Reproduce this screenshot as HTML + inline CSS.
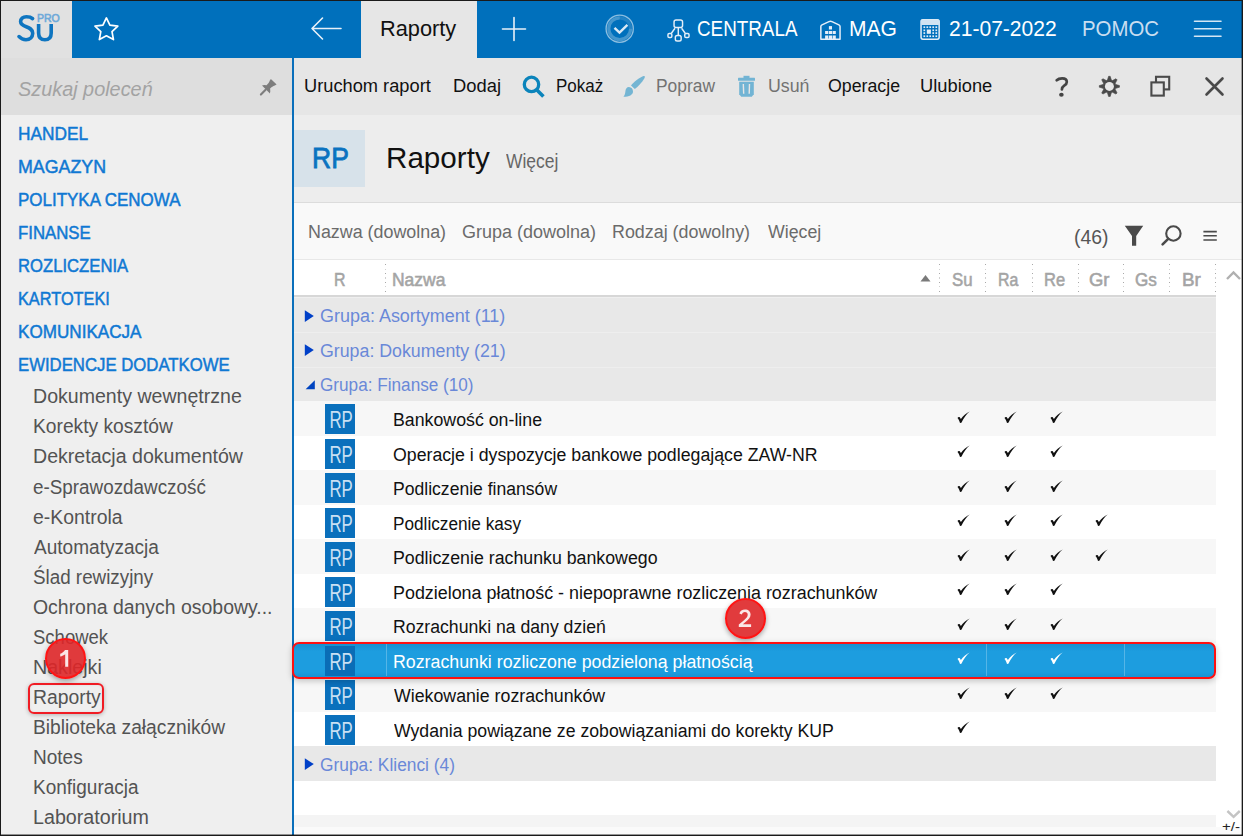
<!DOCTYPE html>
<html><head><meta charset="utf-8"><style>
html,body{margin:0;padding:0;}
body{width:1243px;height:836px;overflow:hidden;background:#1a1a1a;position:relative;font-family:"Liberation Sans", sans-serif;}
svg{display:block;overflow:visible}
</style></head><body>
<div style="position:absolute;left:1px;top:1px;width:1241px;height:834px;background:#ffffff;"></div>
<div style="position:absolute;left:1px;top:1px;width:71px;height:57px;background:#e1e1e1;"></div>
<div style="position:absolute;left:72px;top:1px;width:1170px;height:57px;background:#0070bc;"></div>
<svg style="position:absolute;left:14px;top:12px;" width="50" height="34" viewBox="0 0 50 34">
<path d="M18.6 6.6 C17.0 5.1 14.8 4.7 12.4 4.7 C8.8 4.7 6.6 6.8 6.6 9.5 C6.6 16.0 18.7 13.6 18.7 21.3 C18.7 25.1 15.9 27.7 12.0 27.7 C9.1 27.7 6.8 26.5 5.0 24.6" fill="none" stroke="#0f75c0" stroke-width="3.6" stroke-linecap="round"/>
<path d="M24.6 11.9 V21.0 C24.6 25.5 27.1 27.8 30.9 27.8 C34.7 27.8 37.2 25.5 37.2 21.0 V11.9" fill="none" stroke="#0f75c0" stroke-width="3.6"/>
<text x="22.9" y="10" font-family="Liberation Sans" font-size="11" fill="#6ea9d9" textLength="22.8" lengthAdjust="spacingAndGlyphs" stroke="#6ea9d9" stroke-width="0.6">PRO</text>
</svg>
<svg style="position:absolute;left:92px;top:15px;" width="28" height="28" viewBox="0 0 28 28"><polygon points="14.40,2.90 17.87,10.13 25.81,11.19 20.01,16.72 21.45,24.61 14.40,20.80 7.35,24.61 8.79,16.72 2.99,11.19 10.93,10.13" fill="none" stroke="#fff" stroke-width="1.7" stroke-linejoin="round"/></svg>
<svg style="position:absolute;left:308px;top:15px;" width="38" height="28" viewBox="0 0 38 28"><path d="M4 13.5 H33 M14.5 3 L4 13.5 L14.5 24" fill="none" stroke="#e8f0f8" stroke-width="1.6" stroke-linecap="round" stroke-linejoin="round"/></svg>
<div style="position:absolute;left:361px;top:1px;width:116px;height:57px;background:#e6e6e6;"></div>
<div style="left:379.82px;transform:scaleX(0.9893);position:absolute;top:28.92px;line-height:0;font-size:22px;color:#111;font-weight:normal;font-style:normal;white-space:nowrap;transform-origin:0 0;">Raporty</div>
<svg style="position:absolute;left:498px;top:15px;" width="32" height="28" viewBox="0 0 32 28"><path d="M16 2.5 V25.5 M4.5 14 H27.5" fill="none" stroke="#e8f0f8" stroke-width="1.6" stroke-linecap="round"/></svg>
<svg style="position:absolute;left:603px;top:12px;" width="34" height="34" viewBox="0 0 34 34"><circle cx="16.7" cy="16.7" r="13.6" fill="none" stroke="rgba(255,255,255,0.55)" stroke-width="1.3"/><circle cx="16.7" cy="16.7" r="10.9" fill="none" stroke="rgba(255,255,255,0.13)" stroke-width="3.2"/><path d="M16.7 5.8 A10.9 10.9 0 1 0 27.6 16.7" fill="none" stroke="rgba(255,255,255,0.16)" stroke-width="3.2"/><path d="M11.5 15.8 L16.5 20.6 L24.4 12.8" fill="none" stroke="#dbe9f5" stroke-width="2.4"/></svg>
<svg style="position:absolute;left:664px;top:16px;" width="30" height="28" viewBox="0 0 30 28"><g fill="none" stroke="#e4eef8" stroke-width="1.45"><rect x="10.05" y="3.95" width="8.5" height="7.6" rx="2"/><rect x="3.95" y="17.55" width="3.9" height="4.0" rx="1.3"/><rect x="11.35" y="19.45" width="5.8" height="5.6" rx="1.8"/><rect x="20.75" y="17.55" width="4.3" height="4.0" rx="1.3"/><path d="M14.3 11.6 V19.4 M11.0 12.3 L7.4 17.2 M17.6 12.3 L21.2 17.2"/></g></svg>
<div style="left:696.74px;transform:scaleX(0.8560);position:absolute;top:28.82px;line-height:0;font-size:22px;color:#fff;font-weight:normal;font-style:normal;white-space:nowrap;transform-origin:0 0;">CENTRALA</div>
<svg style="position:absolute;left:818px;top:18px;" width="26" height="24" viewBox="0 0 26 24"><path d="M2.85 21.15 V8.6 C2.85 7.8 3.2 7.3 4.0 6.9 L11.0 3.6 C11.9 3.2 13.0 3.2 13.9 3.6 L20.9 6.9 C21.7 7.3 22.05 7.8 22.05 8.6 V21.15 Z" fill="none" stroke="#e4eef8" stroke-width="1.5" stroke-linejoin="round"/><g fill="#e4eef8"><rect x="10.9" y="8.1" width="3.1" height="3.4"/><rect x="7.1" y="13" width="3.2" height="3"/><rect x="10.9" y="13" width="3.1" height="3"/><rect x="14.6" y="13" width="3.2" height="3"/><rect x="7.1" y="17.5" width="3.2" height="3.7"/><rect x="10.9" y="17.5" width="3.1" height="3.7"/><rect x="14.6" y="17.5" width="3.2" height="3.7"/></g></svg>
<div style="left:849.09px;transform:scaleX(0.9574);position:absolute;top:28.82px;line-height:0;font-size:22px;color:#fff;font-weight:normal;font-style:normal;white-space:nowrap;transform-origin:0 0;">MAG</div>
<svg style="position:absolute;left:919px;top:17px;" width="24" height="25" viewBox="0 0 24 25"><rect x="2.05" y="2.65" width="18.1" height="19.5" rx="1.8" fill="none" stroke="#e4eef8" stroke-width="1.5"/><rect x="2" y="2.5" width="18.2" height="5.6" rx="1" fill="#d0e3f2"/><g fill="#e4eef8"><rect x="4.45" y="9.35" width="1.7" height="1.7"/><rect x="7.45" y="9.35" width="1.7" height="1.7"/><rect x="10.35" y="9.35" width="1.7" height="1.7"/><rect x="13.35" y="9.35" width="1.7" height="1.7"/><rect x="16.45" y="9.35" width="1.7" height="1.7"/><rect x="4.45" y="12.45" width="1.7" height="1.7"/><rect x="13.35" y="12.45" width="1.7" height="1.7"/><rect x="16.45" y="12.45" width="1.7" height="1.7"/><rect x="4.45" y="15.25" width="1.7" height="1.7"/><rect x="13.35" y="15.25" width="1.7" height="1.7"/><rect x="16.45" y="15.25" width="1.7" height="1.7"/><rect x="4.45" y="18.35" width="1.7" height="1.7"/><rect x="7.45" y="18.35" width="1.7" height="1.7"/><rect x="10.35" y="18.35" width="1.7" height="1.7"/><rect x="13.35" y="18.35" width="1.7" height="1.7"/><rect x="16.45" y="18.35" width="1.7" height="1.7"/><rect x="7.8" y="12.5" width="4.1" height="4.3"/></g></svg>
<div style="left:948.74px;transform:scaleX(0.9568);position:absolute;top:28.82px;line-height:0;font-size:22px;color:#fff;font-weight:normal;font-style:normal;white-space:nowrap;transform-origin:0 0;">21-07-2022</div>
<div style="left:1082.10px;transform:scaleX(0.9487);position:absolute;top:28.79px;line-height:0;font-size:21.5px;color:#c9def0;font-weight:normal;font-style:normal;white-space:nowrap;transform-origin:0 0;">POMOC</div>
<svg style="position:absolute;left:1192px;top:18px;" width="32" height="22" viewBox="0 0 32 22"><path d="M2.5 3.2 H29 M2.5 10.7 H29 M2.5 18.2 H29" fill="none" stroke="#d5e6f4" stroke-width="1.6" stroke-linecap="round"/></svg>
<div style="position:absolute;left:1px;top:58px;width:291px;height:57px;background:#dedede;"></div>
<div style="position:absolute;left:1px;top:115px;width:291px;height:720px;background:#efefef;"></div>
<div style="position:absolute;left:292px;top:58px;width:2px;height:777px;background:#0a6fbb;"></div>
<div style="left:18.33px;transform:scaleX(0.9686);position:absolute;top:89.03px;line-height:0;font-size:20.5px;color:#a3a3a3;font-weight:normal;font-style:italic;white-space:nowrap;transform-origin:0 0;">Szukaj poleceń</div>
<svg style="position:absolute;left:250px;top:70px;" width="40" height="35" viewBox="0 0 40 35"><path d="M20.9 9.0 L26.6 14.6 L24.8 15.6 C23.0 16.1 21.5 17.2 20.1 18.6 L20.3 21.2 L19.9 23.4 L12.0 15.5 L14.2 15.1 L16.6 15.3 C18.1 13.9 19.3 12.3 19.8 10.6 Z" fill="#7d7d7d"/><path d="M15.6 19.8 L10.9 24.6" stroke="#7d7d7d" stroke-width="2.1" stroke-linecap="round"/></svg>
<div style="left:17.78px;transform:scaleX(0.9200);position:absolute;top:133.91px;line-height:0;font-size:18.8px;color:#0f78d3;font-weight:normal;font-style:normal;white-space:nowrap;transform-origin:0 0;-webkit-text-stroke:0.5px #0f78d3;">HANDEL</div>
<div style="left:17.75px;transform:scaleX(0.9484);position:absolute;top:166.86px;line-height:0;font-size:18.8px;color:#0f78d3;font-weight:normal;font-style:normal;white-space:nowrap;transform-origin:0 0;-webkit-text-stroke:0.5px #0f78d3;">MAGAZYN</div>
<div style="left:17.80px;transform:scaleX(0.9034);position:absolute;top:199.81px;line-height:0;font-size:18.8px;color:#0f78d3;font-weight:normal;font-style:normal;white-space:nowrap;transform-origin:0 0;-webkit-text-stroke:0.5px #0f78d3;">POLITYKA CENOWA</div>
<div style="left:17.81px;transform:scaleX(0.8938);position:absolute;top:232.76px;line-height:0;font-size:18.8px;color:#0f78d3;font-weight:normal;font-style:normal;white-space:nowrap;transform-origin:0 0;-webkit-text-stroke:0.5px #0f78d3;">FINANSE</div>
<div style="left:17.81px;transform:scaleX(0.8870);position:absolute;top:265.71px;line-height:0;font-size:18.8px;color:#0f78d3;font-weight:normal;font-style:normal;white-space:nowrap;transform-origin:0 0;-webkit-text-stroke:0.5px #0f78d3;">ROZLICZENIA</div>
<div style="left:17.83px;transform:scaleX(0.8680);position:absolute;top:298.66px;line-height:0;font-size:18.8px;color:#0f78d3;font-weight:normal;font-style:normal;white-space:nowrap;transform-origin:0 0;-webkit-text-stroke:0.5px #0f78d3;">KARTOTEKI</div>
<div style="left:17.79px;transform:scaleX(0.9104);position:absolute;top:331.61px;line-height:0;font-size:18.8px;color:#0f78d3;font-weight:normal;font-style:normal;white-space:nowrap;transform-origin:0 0;-webkit-text-stroke:0.5px #0f78d3;">KOMUNIKACJA</div>
<div style="left:17.81px;transform:scaleX(0.8911);position:absolute;top:364.56px;line-height:0;font-size:18.8px;color:#0f78d3;font-weight:normal;font-style:normal;white-space:nowrap;transform-origin:0 0;-webkit-text-stroke:0.5px #0f78d3;">EWIDENCJE DODATKOWE</div>
<div style="left:33.00px;transform:scaleX(1.0034);position:absolute;top:396.47px;line-height:0;font-size:19.5px;color:#535353;font-weight:normal;font-style:normal;white-space:nowrap;transform-origin:0 0;">Dokumenty wewnętrzne</div>
<div style="left:33.01px;transform:scaleX(0.9851);position:absolute;top:426.48px;line-height:0;font-size:19.5px;color:#535353;font-weight:normal;font-style:normal;white-space:nowrap;transform-origin:0 0;">Korekty kosztów</div>
<div style="left:33.00px;transform:scaleX(1.0038);position:absolute;top:456.49px;line-height:0;font-size:19.5px;color:#535353;font-weight:normal;font-style:normal;white-space:nowrap;transform-origin:0 0;">Dekretacja dokumentów</div>
<div style="left:33.03px;transform:scaleX(0.9667);position:absolute;top:486.50px;line-height:0;font-size:19.5px;color:#535353;font-weight:normal;font-style:normal;white-space:nowrap;transform-origin:0 0;">e-Sprawozdawczość</div>
<div style="left:33.00px;transform:scaleX(0.9955);position:absolute;top:516.51px;line-height:0;font-size:19.5px;color:#535353;font-weight:normal;font-style:normal;white-space:nowrap;transform-origin:0 0;">e-Kontrola</div>
<div style="left:34.00px;transform:scaleX(0.9766);position:absolute;top:546.52px;line-height:0;font-size:19.5px;color:#535353;font-weight:normal;font-style:normal;white-space:nowrap;transform-origin:0 0;">Automatyzacja</div>
<div style="left:33.04px;transform:scaleX(0.9645);position:absolute;top:576.53px;line-height:0;font-size:19.5px;color:#535353;font-weight:normal;font-style:normal;white-space:nowrap;transform-origin:0 0;">Ślad rewizyjny</div>
<div style="left:33.00px;transform:scaleX(0.9966);position:absolute;top:606.54px;line-height:0;font-size:19.5px;color:#535353;font-weight:normal;font-style:normal;white-space:nowrap;transform-origin:0 0;">Ochrona danych osobowy...</div>
<div style="left:33.05px;transform:scaleX(0.9487);position:absolute;top:636.55px;line-height:0;font-size:19.5px;color:#535353;font-weight:normal;font-style:normal;white-space:nowrap;transform-origin:0 0;">Schowek</div>
<div style="left:32.99px;transform:scaleX(1.0076);position:absolute;top:666.56px;line-height:0;font-size:19.5px;color:#535353;font-weight:normal;font-style:normal;white-space:nowrap;transform-origin:0 0;">Naklejki</div>
<div style="left:33.01px;transform:scaleX(0.9925);position:absolute;top:696.57px;line-height:0;font-size:19.5px;color:#535353;font-weight:normal;font-style:normal;white-space:nowrap;transform-origin:0 0;">Raporty</div>
<div style="left:33.02px;transform:scaleX(0.9845);position:absolute;top:726.58px;line-height:0;font-size:19.5px;color:#535353;font-weight:normal;font-style:normal;white-space:nowrap;transform-origin:0 0;">Biblioteka załączników</div>
<div style="left:33.02px;transform:scaleX(0.9760);position:absolute;top:756.59px;line-height:0;font-size:19.5px;color:#535353;font-weight:normal;font-style:normal;white-space:nowrap;transform-origin:0 0;">Notes</div>
<div style="left:33.03px;transform:scaleX(0.9741);position:absolute;top:786.60px;line-height:0;font-size:19.5px;color:#535353;font-weight:normal;font-style:normal;white-space:nowrap;transform-origin:0 0;">Konfiguracja</div>
<div style="left:32.99px;transform:scaleX(1.0088);position:absolute;top:816.61px;line-height:0;font-size:19.5px;color:#535353;font-weight:normal;font-style:normal;white-space:nowrap;transform-origin:0 0;">Laboratorium</div>
<div style="position:absolute;left:294px;top:58px;width:948px;height:57px;background:#e6e6e6;"></div>
<div style="left:303.80px;transform:scaleX(0.9984);position:absolute;top:86.28px;line-height:0;font-size:18.3px;color:#111;font-weight:normal;font-style:normal;white-space:nowrap;transform-origin:0 0;">Uruchom raport</div>
<div style="left:452.60px;transform:scaleX(1.0043);position:absolute;top:86.28px;line-height:0;font-size:18.3px;color:#111;font-weight:normal;font-style:normal;white-space:nowrap;transform-origin:0 0;">Dodaj</div>
<svg style="position:absolute;left:520px;top:74px;" width="26" height="25" viewBox="0 0 26 25"><circle cx="11.5" cy="10.4" r="7.2" fill="none" stroke="#0b84bb" stroke-width="3.3"/><path d="M16.2 15.2 L23.4 22.4" stroke="#0b84bb" stroke-width="3.6"/></svg>
<div style="left:555.57px;transform:scaleX(0.9286);position:absolute;top:86.28px;line-height:0;font-size:18.3px;color:#111;font-weight:normal;font-style:normal;white-space:nowrap;transform-origin:0 0;">Pokaż</div>
<svg style="position:absolute;left:621px;top:74px;" width="26" height="25" viewBox="0 0 26 25"><path d="M10.0 11.4 C13.0 8.0 18.0 3.6 22.6 2.0 C24.2 1.6 24.0 3.0 23.4 4.2 C21.0 8.6 17.0 12.4 13.8 15.1 Z" fill="#74b5d3"/><path d="M8.0 13.1 C10.4 13.2 12.0 15.0 12.0 17.4 C12.0 20.6 8.4 22.8 2.4 22.8 C3.6 21.4 4.2 19.6 4.4 17.2 C4.6 14.8 6.0 13.0 8.0 13.1 Z" fill="#74b5d3"/></svg>
<div style="left:656.05px;transform:scaleX(0.9508);position:absolute;top:86.28px;line-height:0;font-size:18.3px;color:#727272;font-weight:normal;font-style:normal;white-space:nowrap;transform-origin:0 0;">Popraw</div>
<svg style="position:absolute;left:736px;top:74px;" width="22" height="25" viewBox="0 0 22 25"><g fill="#72b4d4"><rect x="2" y="3.8" width="17" height="3" rx="0.5"/><rect x="7.5" y="1.8" width="6" height="3"/><path d="M3.2 7.8 H17.8 V20.2 L15.8 22.8 H5.2 L3.2 20.2 Z"/></g><g fill="#e6e6e6"><path d="M6.6 10 H8 L8.4 19.8 H7 Z"/><path d="M12.8 10 H14.2 L13.9 19.8 H12.5 Z"/></g></svg>
<div style="left:768.03px;transform:scaleX(0.9707);position:absolute;top:86.28px;line-height:0;font-size:18.3px;color:#727272;font-weight:normal;font-style:normal;white-space:nowrap;transform-origin:0 0;">Usuń</div>
<div style="left:828.03px;transform:scaleX(0.9712);position:absolute;top:86.28px;line-height:0;font-size:18.3px;color:#111;font-weight:normal;font-style:normal;white-space:nowrap;transform-origin:0 0;">Operacje</div>
<div style="left:919.90px;transform:scaleX(1.0014);position:absolute;top:86.28px;line-height:0;font-size:18.3px;color:#111;font-weight:normal;font-style:normal;white-space:nowrap;transform-origin:0 0;">Ulubione</div>
<svg style="position:absolute;left:1053px;top:74px;" width="18" height="26" viewBox="0 0 18 26"><path d="M3.7 6.2 C5.0 4.9 7.0 4.3 9.2 4.3 C12.0 4.3 13.8 5.6 13.8 7.9 C13.8 9.8 12.6 10.8 11.2 11.7 C9.9 12.6 8.9 13.4 8.9 15.4" fill="none" stroke="#444" stroke-width="2.7" stroke-linecap="round"/><ellipse cx="8.4" cy="20.8" rx="2.3" ry="2.0" fill="#444"/></svg>
<svg style="position:absolute;left:1096px;top:73px;" width="28" height="28" viewBox="0 0 28 28"><polygon points="11.45,7.09 12.59,3.33 14.21,3.33 15.35,7.09 16.48,7.56 19.95,5.71 21.09,6.85 19.24,10.32 19.71,11.45 23.47,12.59 23.47,14.21 19.71,15.35 19.24,16.48 21.09,19.95 19.95,21.09 16.48,19.24 15.35,19.71 14.21,23.47 12.59,23.47 11.45,19.71 10.32,19.24 6.85,21.09 5.71,19.95 7.56,16.48 7.09,15.35 3.33,14.21 3.33,12.59 7.09,11.45 7.56,10.32 5.71,6.85 6.85,5.71 10.32,7.56" fill="#4a4a4a" stroke="#4a4a4a" stroke-width="0.6" stroke-linejoin="round"/><circle cx="13.4" cy="13.4" r="4.5" fill="#e6e6e6"/></svg>
<svg style="position:absolute;left:1149px;top:75px;" width="24" height="23" viewBox="0 0 24 23"><g fill="none" stroke="#4a4a4a" stroke-width="2.1"><rect x="7" y="1.8" width="13.2" height="12.6"/><rect x="2.4" y="7.4" width="12.4" height="13.2" fill="#e6e6e6"/></g></svg>
<svg style="position:absolute;left:1203px;top:75px;" width="24" height="24" viewBox="0 0 24 24"><path d="M3.5 3.5 L19.5 19.5 M19.5 3.5 L3.5 19.5" stroke="#4a4a4a" stroke-width="2.6" stroke-linecap="round"/></svg>
<div style="position:absolute;left:294px;top:115px;width:948px;height:87px;background:#ededed;"></div>
<div style="position:absolute;left:294px;top:202px;width:948px;height:1px;background:#dcdcdc;"></div>
<div style="position:absolute;left:294px;top:130px;width:71px;height:57px;background:#d7e2ea;"></div>
<div style="left:311.57px;transform:scaleX(0.9135);position:absolute;top:158.34px;line-height:0;font-size:29px;color:#0a72c0;font-weight:normal;font-style:normal;white-space:nowrap;transform-origin:0 0;-webkit-text-stroke:0.8px #0a72c0;">RP</div>
<div style="left:385.99px;transform:scaleX(1.0040);position:absolute;top:157.97px;line-height:0;font-size:29.5px;color:#111;font-weight:normal;font-style:normal;white-space:nowrap;transform-origin:0 0;">Raporty</div>
<div style="left:505.80px;transform:scaleX(0.8828);position:absolute;top:161.27px;line-height:0;font-size:19.8px;color:#666;font-weight:normal;font-style:normal;white-space:nowrap;transform-origin:0 0;">Więcej</div>
<div style="position:absolute;left:294px;top:203px;width:948px;height:56px;background:#f9f9f9;"></div>
<div style="position:absolute;left:294px;top:259px;width:948px;height:1px;background:#e8e8e8;"></div>
<div style="left:308.01px;transform:scaleX(0.9927);position:absolute;top:232.38px;line-height:0;font-size:18px;color:#6b6b6b;font-weight:normal;font-style:normal;white-space:nowrap;transform-origin:0 0;">Nazwa (dowolna)</div>
<div style="left:462.00px;transform:scaleX(1.0000);position:absolute;top:232.38px;line-height:0;font-size:18px;color:#6b6b6b;font-weight:normal;font-style:normal;white-space:nowrap;transform-origin:0 0;">Grupa (dowolna)</div>
<div style="left:612.41px;transform:scaleX(0.9927);position:absolute;top:232.38px;line-height:0;font-size:18px;color:#6b6b6b;font-weight:normal;font-style:normal;white-space:nowrap;transform-origin:0 0;">Rodzaj (dowolny)</div>
<div style="left:767.70px;transform:scaleX(0.9868);position:absolute;top:232.38px;line-height:0;font-size:18px;color:#6b6b6b;font-weight:normal;font-style:normal;white-space:nowrap;transform-origin:0 0;">Więcej</div>
<div style="left:1073.71px;transform:scaleX(0.9939);position:absolute;top:237.37px;line-height:0;font-size:19.5px;color:#555;font-weight:normal;font-style:normal;white-space:nowrap;transform-origin:0 0;">(46)</div>
<svg style="position:absolute;left:1123px;top:224px;" width="22" height="24" viewBox="0 0 22 24"><path d="M1.8 1.8 H20.2 L13.2 12 V21.8 H9 V12 Z" fill="#4a4a4a"/></svg>
<svg style="position:absolute;left:1159px;top:224px;" width="26" height="24" viewBox="0 0 26 24"><circle cx="14.4" cy="9.5" r="7.2" fill="none" stroke="#4a4a4a" stroke-width="2.1"/><path d="M9.2 14.8 L3.6 20.4" stroke="#4a4a4a" stroke-width="2.6" stroke-linecap="round"/></svg>
<svg style="position:absolute;left:1201px;top:228px;" width="18" height="15" viewBox="0 0 18 15"><path d="M2.4 3.6 H15.8 M2.4 7.7 H15.8 M2.4 12 H15.8" stroke="#4a4a4a" stroke-width="1.6"/></svg>
<div style="position:absolute;left:294px;top:260px;width:922px;height:35px;background:#ffffff;"></div>
<div style="position:absolute;left:294px;top:295px;width:922px;height:2px;background:#d7d7d7;"></div>
<div style="position:absolute;left:294px;top:297px;width:922px;height:1px;background:#efefef;"></div>
<div style="left:333.89px;transform:scaleX(0.9091);position:absolute;top:280.05px;line-height:0;font-size:17.5px;color:#a4a4a4;font-weight:normal;font-style:normal;white-space:nowrap;transform-origin:0 0;-webkit-text-stroke:0.55px #a6a6a6;">R</div>
<div style="left:392.30px;transform:scaleX(0.9981);position:absolute;top:280.05px;line-height:0;font-size:17.5px;color:#a4a4a4;font-weight:normal;font-style:normal;white-space:nowrap;transform-origin:0 0;-webkit-text-stroke:0.55px #a6a6a6;">Nazwa</div>
<svg style="position:absolute;left:919px;top:273px;" width="14" height="10" viewBox="0 0 14 10"><path d="M1.5 8.5 L6.5 2 L11.5 8.5 Z" fill="#7a7a7a"/></svg>
<div style="left:951.54px;transform:scaleX(0.9600);position:absolute;top:280.05px;line-height:0;font-size:17.5px;color:#a4a4a4;font-weight:normal;font-style:normal;white-space:nowrap;transform-origin:0 0;-webkit-text-stroke:0.55px #a6a6a6;">Su</div>
<div style="left:998.09px;transform:scaleX(0.9091);position:absolute;top:280.05px;line-height:0;font-size:17.5px;color:#a4a4a4;font-weight:normal;font-style:normal;white-space:nowrap;transform-origin:0 0;-webkit-text-stroke:0.55px #a6a6a6;">Ra</div>
<div style="left:1044.06px;transform:scaleX(0.9429);position:absolute;top:280.05px;line-height:0;font-size:17.5px;color:#a4a4a4;font-weight:normal;font-style:normal;white-space:nowrap;transform-origin:0 0;-webkit-text-stroke:0.55px #a6a6a6;">Re</div>
<div style="left:1088.94px;transform:scaleX(1.0556);position:absolute;top:280.05px;line-height:0;font-size:17.5px;color:#a4a4a4;font-weight:normal;font-style:normal;white-space:nowrap;transform-origin:0 0;-webkit-text-stroke:0.55px #a6a6a6;">Gr</div>
<div style="left:1135.02px;transform:scaleX(0.9762);position:absolute;top:280.05px;line-height:0;font-size:17.5px;color:#a4a4a4;font-weight:normal;font-style:normal;white-space:nowrap;transform-origin:0 0;-webkit-text-stroke:0.55px #a6a6a6;">Gs</div>
<div style="left:1181.62px;transform:scaleX(1.0765);position:absolute;top:280.05px;line-height:0;font-size:17.5px;color:#a4a4a4;font-weight:normal;font-style:normal;white-space:nowrap;transform-origin:0 0;-webkit-text-stroke:0.55px #a6a6a6;">Br</div>
<div style="position:absolute;left:385px;top:264px;width:1px;height:31px;background:repeating-linear-gradient(#a8a8a8 0,#a8a8a8 1px,transparent 1px,transparent 4.5px,#d0d0d0 4.5px,#d0d0d0 5.5px,transparent 5.5px,transparent 9px)"></div>
<div style="position:absolute;left:939px;top:264px;width:1px;height:31px;background:repeating-linear-gradient(#a8a8a8 0,#a8a8a8 1px,transparent 1px,transparent 4.5px,#d0d0d0 4.5px,#d0d0d0 5.5px,transparent 5.5px,transparent 9px)"></div>
<div style="position:absolute;left:985px;top:264px;width:1px;height:31px;background:repeating-linear-gradient(#a8a8a8 0,#a8a8a8 1px,transparent 1px,transparent 4.5px,#d0d0d0 4.5px,#d0d0d0 5.5px,transparent 5.5px,transparent 9px)"></div>
<div style="position:absolute;left:1032px;top:264px;width:1px;height:31px;background:repeating-linear-gradient(#a8a8a8 0,#a8a8a8 1px,transparent 1px,transparent 4.5px,#d0d0d0 4.5px,#d0d0d0 5.5px,transparent 5.5px,transparent 9px)"></div>
<div style="position:absolute;left:1078px;top:264px;width:1px;height:31px;background:repeating-linear-gradient(#a8a8a8 0,#a8a8a8 1px,transparent 1px,transparent 4.5px,#d0d0d0 4.5px,#d0d0d0 5.5px,transparent 5.5px,transparent 9px)"></div>
<div style="position:absolute;left:1123px;top:264px;width:1px;height:31px;background:repeating-linear-gradient(#a8a8a8 0,#a8a8a8 1px,transparent 1px,transparent 4.5px,#d0d0d0 4.5px,#d0d0d0 5.5px,transparent 5.5px,transparent 9px)"></div>
<div style="position:absolute;left:1169px;top:264px;width:1px;height:31px;background:repeating-linear-gradient(#a8a8a8 0,#a8a8a8 1px,transparent 1px,transparent 4.5px,#d0d0d0 4.5px,#d0d0d0 5.5px,transparent 5.5px,transparent 9px)"></div>
<div style="position:absolute;left:1215px;top:264px;width:1px;height:31px;background:repeating-linear-gradient(#a8a8a8 0,#a8a8a8 1px,transparent 1px,transparent 4.5px,#d0d0d0 4.5px,#d0d0d0 5.5px,transparent 5.5px,transparent 9px)"></div>
<svg style="position:absolute;left:1224px;top:267px;" width="18" height="16" viewBox="0 0 18 16"><path d="M3 12 L9.5 5.5 L16 12" fill="none" stroke="#b0b0b0" stroke-width="2.4"/></svg>
<div style="position:absolute;left:294px;top:297.6px;width:922px;height:34.5px;background:#e8e8e8;"></div>
<svg style="position:absolute;left:303px;top:308.6px;" width="13" height="14" viewBox="0 0 13 14"><path d="M1.8 1.2 L10.8 7.1 L1.8 13.0 Z" fill="#0040c8"/></svg>
<div style="left:319.90px;transform:scaleX(0.9978);position:absolute;top:316.08px;line-height:0;font-size:18px;color:#6a88d8;font-weight:normal;font-style:normal;white-space:nowrap;transform-origin:0 0;">Grupa: Asortyment (11)</div>
<div style="position:absolute;left:294px;top:332.1px;width:922px;height:34.5px;background:#e8e8e8;"></div>
<div style="position:absolute;left:294px;top:332px;width:922px;height:1px;background:#eeeeee;"></div>
<svg style="position:absolute;left:303px;top:343.1px;" width="13" height="14" viewBox="0 0 13 14"><path d="M1.8 1.2 L10.8 7.1 L1.8 13.0 Z" fill="#0040c8"/></svg>
<div style="left:319.91px;transform:scaleX(0.9871);position:absolute;top:350.58px;line-height:0;font-size:18px;color:#6a88d8;font-weight:normal;font-style:normal;white-space:nowrap;transform-origin:0 0;">Grupa: Dokumenty (21)</div>
<div style="position:absolute;left:294px;top:366.6px;width:922px;height:34.5px;background:#e8e8e8;"></div>
<div style="position:absolute;left:294px;top:367px;width:922px;height:1px;background:#eeeeee;"></div>
<svg style="position:absolute;left:304px;top:378.6px;" width="13" height="14" viewBox="0 0 13 14"><path d="M1.6 10.2 L10.8 1.2 V10.2 Z" fill="#0044c0"/></svg>
<div style="left:319.95px;transform:scaleX(0.9535);position:absolute;top:385.08px;line-height:0;font-size:18px;color:#6a88d8;font-weight:normal;font-style:normal;white-space:nowrap;transform-origin:0 0;">Grupa: Finanse (10)</div>
<div style="position:absolute;left:294px;top:401.1px;width:922px;height:34.5px;background:#f7f7f7;"></div>
<svg style="position:absolute;left:325px;top:404.1px;" width="30" height="30" viewBox="0 0 30 30"><rect width="30" height="30" fill="#0a70bc"/><text x="4.4" y="23.8" font-family="Liberation Sans" font-size="24" fill="#c9e0f3" textLength="23.4" lengthAdjust="spacingAndGlyphs">RP</text></svg>
<div style="left:393.01px;transform:scaleX(0.9866);position:absolute;top:420.48px;line-height:0;font-size:18px;color:#111;font-weight:normal;font-style:normal;white-space:nowrap;transform-origin:0 0;">Bankowość on-line</div>
<svg style="position:absolute;left:957.3px;top:410.70000000000005px;" width="14" height="13" viewBox="0 0 14 13"><path d="M0.5 6.9 C1.4 5.6 2.9 5.5 3.9 8.1 C6.0 5.0 9.0 2.2 12.7 0.5 C9.6 3.0 6.8 6.8 4.4 11.8 L3.0 12.0 C2.4 9.9 1.7 7.9 0.5 6.9 Z" fill="#111"/></svg>
<svg style="position:absolute;left:1003.6px;top:410.70000000000005px;" width="14" height="13" viewBox="0 0 14 13"><path d="M0.5 6.9 C1.4 5.6 2.9 5.5 3.9 8.1 C6.0 5.0 9.0 2.2 12.7 0.5 C9.6 3.0 6.8 6.8 4.4 11.8 L3.0 12.0 C2.4 9.9 1.7 7.9 0.5 6.9 Z" fill="#111"/></svg>
<svg style="position:absolute;left:1050.3px;top:410.70000000000005px;" width="14" height="13" viewBox="0 0 14 13"><path d="M0.5 6.9 C1.4 5.6 2.9 5.5 3.9 8.1 C6.0 5.0 9.0 2.2 12.7 0.5 C9.6 3.0 6.8 6.8 4.4 11.8 L3.0 12.0 C2.4 9.9 1.7 7.9 0.5 6.9 Z" fill="#111"/></svg>
<div style="position:absolute;left:294px;top:435.6px;width:922px;height:34.5px;background:#ffffff;"></div>
<svg style="position:absolute;left:325px;top:438.6px;" width="30" height="30" viewBox="0 0 30 30"><rect width="30" height="30" fill="#0a70bc"/><text x="4.4" y="23.8" font-family="Liberation Sans" font-size="24" fill="#c9e0f3" textLength="23.4" lengthAdjust="spacingAndGlyphs">RP</text></svg>
<div style="left:393.02px;transform:scaleX(0.9846);position:absolute;top:454.98px;line-height:0;font-size:18px;color:#111;font-weight:normal;font-style:normal;white-space:nowrap;transform-origin:0 0;">Operacje i dyspozycje bankowe podlegające ZAW-NR</div>
<svg style="position:absolute;left:957.3px;top:445.20000000000005px;" width="14" height="13" viewBox="0 0 14 13"><path d="M0.5 6.9 C1.4 5.6 2.9 5.5 3.9 8.1 C6.0 5.0 9.0 2.2 12.7 0.5 C9.6 3.0 6.8 6.8 4.4 11.8 L3.0 12.0 C2.4 9.9 1.7 7.9 0.5 6.9 Z" fill="#111"/></svg>
<svg style="position:absolute;left:1003.6px;top:445.20000000000005px;" width="14" height="13" viewBox="0 0 14 13"><path d="M0.5 6.9 C1.4 5.6 2.9 5.5 3.9 8.1 C6.0 5.0 9.0 2.2 12.7 0.5 C9.6 3.0 6.8 6.8 4.4 11.8 L3.0 12.0 C2.4 9.9 1.7 7.9 0.5 6.9 Z" fill="#111"/></svg>
<svg style="position:absolute;left:1050.3px;top:445.20000000000005px;" width="14" height="13" viewBox="0 0 14 13"><path d="M0.5 6.9 C1.4 5.6 2.9 5.5 3.9 8.1 C6.0 5.0 9.0 2.2 12.7 0.5 C9.6 3.0 6.8 6.8 4.4 11.8 L3.0 12.0 C2.4 9.9 1.7 7.9 0.5 6.9 Z" fill="#111"/></svg>
<div style="position:absolute;left:294px;top:470.1px;width:922px;height:34.5px;background:#f7f7f7;"></div>
<svg style="position:absolute;left:325px;top:473.1px;" width="30" height="30" viewBox="0 0 30 30"><rect width="30" height="30" fill="#0a70bc"/><text x="4.4" y="23.8" font-family="Liberation Sans" font-size="24" fill="#c9e0f3" textLength="23.4" lengthAdjust="spacingAndGlyphs">RP</text></svg>
<div style="left:393.02px;transform:scaleX(0.9760);position:absolute;top:489.48px;line-height:0;font-size:18px;color:#111;font-weight:normal;font-style:normal;white-space:nowrap;transform-origin:0 0;">Podliczenie finansów</div>
<svg style="position:absolute;left:957.3px;top:479.70000000000005px;" width="14" height="13" viewBox="0 0 14 13"><path d="M0.5 6.9 C1.4 5.6 2.9 5.5 3.9 8.1 C6.0 5.0 9.0 2.2 12.7 0.5 C9.6 3.0 6.8 6.8 4.4 11.8 L3.0 12.0 C2.4 9.9 1.7 7.9 0.5 6.9 Z" fill="#111"/></svg>
<svg style="position:absolute;left:1003.6px;top:479.70000000000005px;" width="14" height="13" viewBox="0 0 14 13"><path d="M0.5 6.9 C1.4 5.6 2.9 5.5 3.9 8.1 C6.0 5.0 9.0 2.2 12.7 0.5 C9.6 3.0 6.8 6.8 4.4 11.8 L3.0 12.0 C2.4 9.9 1.7 7.9 0.5 6.9 Z" fill="#111"/></svg>
<svg style="position:absolute;left:1050.3px;top:479.70000000000005px;" width="14" height="13" viewBox="0 0 14 13"><path d="M0.5 6.9 C1.4 5.6 2.9 5.5 3.9 8.1 C6.0 5.0 9.0 2.2 12.7 0.5 C9.6 3.0 6.8 6.8 4.4 11.8 L3.0 12.0 C2.4 9.9 1.7 7.9 0.5 6.9 Z" fill="#111"/></svg>
<div style="position:absolute;left:294px;top:504.6px;width:922px;height:34.5px;background:#ffffff;"></div>
<svg style="position:absolute;left:325px;top:507.6px;" width="30" height="30" viewBox="0 0 30 30"><rect width="30" height="30" fill="#0a70bc"/><text x="4.4" y="23.8" font-family="Liberation Sans" font-size="24" fill="#c9e0f3" textLength="23.4" lengthAdjust="spacingAndGlyphs">RP</text></svg>
<div style="left:393.05px;transform:scaleX(0.9549);position:absolute;top:523.98px;line-height:0;font-size:18px;color:#111;font-weight:normal;font-style:normal;white-space:nowrap;transform-origin:0 0;">Podliczenie kasy</div>
<svg style="position:absolute;left:957.3px;top:514.2px;" width="14" height="13" viewBox="0 0 14 13"><path d="M0.5 6.9 C1.4 5.6 2.9 5.5 3.9 8.1 C6.0 5.0 9.0 2.2 12.7 0.5 C9.6 3.0 6.8 6.8 4.4 11.8 L3.0 12.0 C2.4 9.9 1.7 7.9 0.5 6.9 Z" fill="#111"/></svg>
<svg style="position:absolute;left:1003.6px;top:514.2px;" width="14" height="13" viewBox="0 0 14 13"><path d="M0.5 6.9 C1.4 5.6 2.9 5.5 3.9 8.1 C6.0 5.0 9.0 2.2 12.7 0.5 C9.6 3.0 6.8 6.8 4.4 11.8 L3.0 12.0 C2.4 9.9 1.7 7.9 0.5 6.9 Z" fill="#111"/></svg>
<svg style="position:absolute;left:1050.3px;top:514.2px;" width="14" height="13" viewBox="0 0 14 13"><path d="M0.5 6.9 C1.4 5.6 2.9 5.5 3.9 8.1 C6.0 5.0 9.0 2.2 12.7 0.5 C9.6 3.0 6.8 6.8 4.4 11.8 L3.0 12.0 C2.4 9.9 1.7 7.9 0.5 6.9 Z" fill="#111"/></svg>
<svg style="position:absolute;left:1095.3px;top:514.2px;" width="14" height="13" viewBox="0 0 14 13"><path d="M0.5 6.9 C1.4 5.6 2.9 5.5 3.9 8.1 C6.0 5.0 9.0 2.2 12.7 0.5 C9.6 3.0 6.8 6.8 4.4 11.8 L3.0 12.0 C2.4 9.9 1.7 7.9 0.5 6.9 Z" fill="#111"/></svg>
<div style="position:absolute;left:294px;top:539.1px;width:922px;height:34.5px;background:#f7f7f7;"></div>
<svg style="position:absolute;left:325px;top:542.1px;" width="30" height="30" viewBox="0 0 30 30"><rect width="30" height="30" fill="#0a70bc"/><text x="4.4" y="23.8" font-family="Liberation Sans" font-size="24" fill="#c9e0f3" textLength="23.4" lengthAdjust="spacingAndGlyphs">RP</text></svg>
<div style="left:393.01px;transform:scaleX(0.9865);position:absolute;top:558.48px;line-height:0;font-size:18px;color:#111;font-weight:normal;font-style:normal;white-space:nowrap;transform-origin:0 0;">Podliczenie rachunku bankowego</div>
<svg style="position:absolute;left:957.3px;top:548.7px;" width="14" height="13" viewBox="0 0 14 13"><path d="M0.5 6.9 C1.4 5.6 2.9 5.5 3.9 8.1 C6.0 5.0 9.0 2.2 12.7 0.5 C9.6 3.0 6.8 6.8 4.4 11.8 L3.0 12.0 C2.4 9.9 1.7 7.9 0.5 6.9 Z" fill="#111"/></svg>
<svg style="position:absolute;left:1003.6px;top:548.7px;" width="14" height="13" viewBox="0 0 14 13"><path d="M0.5 6.9 C1.4 5.6 2.9 5.5 3.9 8.1 C6.0 5.0 9.0 2.2 12.7 0.5 C9.6 3.0 6.8 6.8 4.4 11.8 L3.0 12.0 C2.4 9.9 1.7 7.9 0.5 6.9 Z" fill="#111"/></svg>
<svg style="position:absolute;left:1050.3px;top:548.7px;" width="14" height="13" viewBox="0 0 14 13"><path d="M0.5 6.9 C1.4 5.6 2.9 5.5 3.9 8.1 C6.0 5.0 9.0 2.2 12.7 0.5 C9.6 3.0 6.8 6.8 4.4 11.8 L3.0 12.0 C2.4 9.9 1.7 7.9 0.5 6.9 Z" fill="#111"/></svg>
<svg style="position:absolute;left:1095.3px;top:548.7px;" width="14" height="13" viewBox="0 0 14 13"><path d="M0.5 6.9 C1.4 5.6 2.9 5.5 3.9 8.1 C6.0 5.0 9.0 2.2 12.7 0.5 C9.6 3.0 6.8 6.8 4.4 11.8 L3.0 12.0 C2.4 9.9 1.7 7.9 0.5 6.9 Z" fill="#111"/></svg>
<div style="position:absolute;left:294px;top:573.6px;width:922px;height:34.5px;background:#ffffff;"></div>
<svg style="position:absolute;left:325px;top:576.6px;" width="30" height="30" viewBox="0 0 30 30"><rect width="30" height="30" fill="#0a70bc"/><text x="4.4" y="23.8" font-family="Liberation Sans" font-size="24" fill="#c9e0f3" textLength="23.4" lengthAdjust="spacingAndGlyphs">RP</text></svg>
<div style="left:393.01px;transform:scaleX(0.9938);position:absolute;top:592.98px;line-height:0;font-size:18px;color:#111;font-weight:normal;font-style:normal;white-space:nowrap;transform-origin:0 0;">Podzielona płatność - niepoprawne rozliczenia rozrachunków</div>
<svg style="position:absolute;left:957.3px;top:583.2px;" width="14" height="13" viewBox="0 0 14 13"><path d="M0.5 6.9 C1.4 5.6 2.9 5.5 3.9 8.1 C6.0 5.0 9.0 2.2 12.7 0.5 C9.6 3.0 6.8 6.8 4.4 11.8 L3.0 12.0 C2.4 9.9 1.7 7.9 0.5 6.9 Z" fill="#111"/></svg>
<svg style="position:absolute;left:1003.6px;top:583.2px;" width="14" height="13" viewBox="0 0 14 13"><path d="M0.5 6.9 C1.4 5.6 2.9 5.5 3.9 8.1 C6.0 5.0 9.0 2.2 12.7 0.5 C9.6 3.0 6.8 6.8 4.4 11.8 L3.0 12.0 C2.4 9.9 1.7 7.9 0.5 6.9 Z" fill="#111"/></svg>
<svg style="position:absolute;left:1050.3px;top:583.2px;" width="14" height="13" viewBox="0 0 14 13"><path d="M0.5 6.9 C1.4 5.6 2.9 5.5 3.9 8.1 C6.0 5.0 9.0 2.2 12.7 0.5 C9.6 3.0 6.8 6.8 4.4 11.8 L3.0 12.0 C2.4 9.9 1.7 7.9 0.5 6.9 Z" fill="#111"/></svg>
<div style="position:absolute;left:294px;top:608.1px;width:922px;height:34.5px;background:#f7f7f7;"></div>
<svg style="position:absolute;left:325px;top:611.1px;" width="30" height="30" viewBox="0 0 30 30"><rect width="30" height="30" fill="#0a70bc"/><text x="4.4" y="23.8" font-family="Liberation Sans" font-size="24" fill="#c9e0f3" textLength="23.4" lengthAdjust="spacingAndGlyphs">RP</text></svg>
<div style="left:393.02px;transform:scaleX(0.9800);position:absolute;top:627.48px;line-height:0;font-size:18px;color:#111;font-weight:normal;font-style:normal;white-space:nowrap;transform-origin:0 0;">Rozrachunki na dany dzień</div>
<svg style="position:absolute;left:957.3px;top:617.7px;" width="14" height="13" viewBox="0 0 14 13"><path d="M0.5 6.9 C1.4 5.6 2.9 5.5 3.9 8.1 C6.0 5.0 9.0 2.2 12.7 0.5 C9.6 3.0 6.8 6.8 4.4 11.8 L3.0 12.0 C2.4 9.9 1.7 7.9 0.5 6.9 Z" fill="#111"/></svg>
<svg style="position:absolute;left:1003.6px;top:617.7px;" width="14" height="13" viewBox="0 0 14 13"><path d="M0.5 6.9 C1.4 5.6 2.9 5.5 3.9 8.1 C6.0 5.0 9.0 2.2 12.7 0.5 C9.6 3.0 6.8 6.8 4.4 11.8 L3.0 12.0 C2.4 9.9 1.7 7.9 0.5 6.9 Z" fill="#111"/></svg>
<svg style="position:absolute;left:1050.3px;top:617.7px;" width="14" height="13" viewBox="0 0 14 13"><path d="M0.5 6.9 C1.4 5.6 2.9 5.5 3.9 8.1 C6.0 5.0 9.0 2.2 12.7 0.5 C9.6 3.0 6.8 6.8 4.4 11.8 L3.0 12.0 C2.4 9.9 1.7 7.9 0.5 6.9 Z" fill="#111"/></svg>
<div style="position:absolute;left:294px;top:677.1px;width:922px;height:34.5px;background:#f7f7f7;"></div>
<svg style="position:absolute;left:325px;top:680.1px;" width="30" height="30" viewBox="0 0 30 30"><rect width="30" height="30" fill="#0a70bc"/><text x="4.4" y="23.8" font-family="Liberation Sans" font-size="24" fill="#c9e0f3" textLength="23.4" lengthAdjust="spacingAndGlyphs">RP</text></svg>
<div style="left:394.00px;transform:scaleX(0.9860);position:absolute;top:696.48px;line-height:0;font-size:18px;color:#111;font-weight:normal;font-style:normal;white-space:nowrap;transform-origin:0 0;">Wiekowanie rozrachunków</div>
<svg style="position:absolute;left:957.3px;top:686.7px;" width="14" height="13" viewBox="0 0 14 13"><path d="M0.5 6.9 C1.4 5.6 2.9 5.5 3.9 8.1 C6.0 5.0 9.0 2.2 12.7 0.5 C9.6 3.0 6.8 6.8 4.4 11.8 L3.0 12.0 C2.4 9.9 1.7 7.9 0.5 6.9 Z" fill="#111"/></svg>
<svg style="position:absolute;left:1003.6px;top:686.7px;" width="14" height="13" viewBox="0 0 14 13"><path d="M0.5 6.9 C1.4 5.6 2.9 5.5 3.9 8.1 C6.0 5.0 9.0 2.2 12.7 0.5 C9.6 3.0 6.8 6.8 4.4 11.8 L3.0 12.0 C2.4 9.9 1.7 7.9 0.5 6.9 Z" fill="#111"/></svg>
<svg style="position:absolute;left:1050.3px;top:686.7px;" width="14" height="13" viewBox="0 0 14 13"><path d="M0.5 6.9 C1.4 5.6 2.9 5.5 3.9 8.1 C6.0 5.0 9.0 2.2 12.7 0.5 C9.6 3.0 6.8 6.8 4.4 11.8 L3.0 12.0 C2.4 9.9 1.7 7.9 0.5 6.9 Z" fill="#111"/></svg>
<div style="position:absolute;left:294px;top:711.6px;width:922px;height:34.5px;background:#ffffff;"></div>
<svg style="position:absolute;left:325px;top:714.6px;" width="30" height="30" viewBox="0 0 30 30"><rect width="30" height="30" fill="#0a70bc"/><text x="4.4" y="23.8" font-family="Liberation Sans" font-size="24" fill="#c9e0f3" textLength="23.4" lengthAdjust="spacingAndGlyphs">RP</text></svg>
<div style="left:394.00px;transform:scaleX(0.9814);position:absolute;top:730.98px;line-height:0;font-size:18px;color:#111;font-weight:normal;font-style:normal;white-space:nowrap;transform-origin:0 0;">Wydania powiązane ze zobowiązaniami do korekty KUP</div>
<svg style="position:absolute;left:957.3px;top:721.2px;" width="14" height="13" viewBox="0 0 14 13"><path d="M0.5 6.9 C1.4 5.6 2.9 5.5 3.9 8.1 C6.0 5.0 9.0 2.2 12.7 0.5 C9.6 3.0 6.8 6.8 4.4 11.8 L3.0 12.0 C2.4 9.9 1.7 7.9 0.5 6.9 Z" fill="#111"/></svg>
<div style="position:absolute;left:294px;top:746.1px;width:922px;height:34.5px;background:#e8e8e8;"></div>
<svg style="position:absolute;left:303px;top:757.1px;" width="13" height="14" viewBox="0 0 13 14"><path d="M1.8 1.2 L10.8 7.1 L1.8 13.0 Z" fill="#0040c8"/></svg>
<div style="left:319.94px;transform:scaleX(0.9638);position:absolute;top:764.58px;line-height:0;font-size:18px;color:#6a88d8;font-weight:normal;font-style:normal;white-space:nowrap;transform-origin:0 0;">Grupa: Klienci (4)</div>
<div style="position:absolute;left:292px;top:641.6px;width:924px;height:37px;border:2px solid #ff1010;border-radius:7px;background:linear-gradient(#1890d0,#1d9ddf 22%,#1d9ddf 85%,#1a92d4);box-shadow:0 2px 6px rgba(0,0,0,.22);box-sizing:border-box"></div>
<svg style="position:absolute;left:325px;top:645.6px;" width="30" height="30" viewBox="0 0 30 30"><rect width="30" height="30" fill="#0a6db6"/><text x="4.4" y="23.8" font-family="Liberation Sans" font-size="24" fill="#c9e0f3" textLength="23.4" lengthAdjust="spacingAndGlyphs">RP</text></svg>
<div style="position:absolute;left:386px;top:644.1px;width:1px;height:32px;background:rgba(255,255,255,0.25);"></div>
<div style="position:absolute;left:985.5px;top:644.1px;width:1px;height:32px;background:rgba(255,255,255,0.25);"></div>
<div style="position:absolute;left:1124px;top:644.1px;width:1px;height:32px;background:rgba(255,255,255,0.25);"></div>
<div style="left:393.01px;transform:scaleX(0.9873);position:absolute;top:661.98px;line-height:0;font-size:18px;color:#ffffff;font-weight:normal;font-style:normal;white-space:nowrap;transform-origin:0 0;">Rozrachunki rozliczone podzieloną płatnością</div>
<svg style="position:absolute;left:957.3px;top:652.2px;" width="14" height="13" viewBox="0 0 14 13"><path d="M0.5 6.9 C1.4 5.6 2.9 5.5 3.9 8.1 C6.0 5.0 9.0 2.2 12.7 0.5 C9.6 3.0 6.8 6.8 4.4 11.8 L3.0 12.0 C2.4 9.9 1.7 7.9 0.5 6.9 Z" fill="#ffffff"/></svg>
<svg style="position:absolute;left:1003.6px;top:652.2px;" width="14" height="13" viewBox="0 0 14 13"><path d="M0.5 6.9 C1.4 5.6 2.9 5.5 3.9 8.1 C6.0 5.0 9.0 2.2 12.7 0.5 C9.6 3.0 6.8 6.8 4.4 11.8 L3.0 12.0 C2.4 9.9 1.7 7.9 0.5 6.9 Z" fill="#ffffff"/></svg>
<svg style="position:absolute;left:1050.3px;top:652.2px;" width="14" height="13" viewBox="0 0 14 13"><path d="M0.5 6.9 C1.4 5.6 2.9 5.5 3.9 8.1 C6.0 5.0 9.0 2.2 12.7 0.5 C9.6 3.0 6.8 6.8 4.4 11.8 L3.0 12.0 C2.4 9.9 1.7 7.9 0.5 6.9 Z" fill="#ffffff"/></svg>
<div style="position:absolute;left:294px;top:815px;width:922px;height:12px;background:#f4f4f4;"></div>
<div style="position:absolute;left:294px;top:827px;width:948px;height:8px;background:#fafafa;"></div>
<svg style="position:absolute;left:1224px;top:807.5px;" width="18" height="14" viewBox="0 0 18 14"><path d="M3.4 3 L9.6 8.8 L15.8 3" fill="none" stroke="#c4c4c4" stroke-width="2.4"/></svg>
<div style="left:1221.64px;transform:scaleX(1.1571);position:absolute;top:827.08px;line-height:0;font-size:13px;color:#222;font-weight:normal;font-style:normal;white-space:nowrap;transform-origin:0 0;">+/-</div>
<div style="position:absolute;left:1241px;top:1px;width:1px;height:834px;background:rgba(0,0,0,0.3);"></div>
<div style="position:absolute;left:1px;top:834px;width:1241px;height:1px;background:rgba(0,0,0,0.4);"></div>
<div style="position:absolute;left:28px;top:683px;width:76px;height:31px;border:2px solid #f01c24;border-radius:6px;box-sizing:border-box;box-shadow:0 1px 4px rgba(0,0,0,.25), inset 0 0 3px rgba(0,0,0,.08)"></div>
<div style="position:absolute;left:45.0px;top:638.1px;width:41px;height:41px;border-radius:50%;box-shadow:0 2px 5px rgba(0,0,0,.35)"></div>
<svg style="position:absolute;left:45.0px;top:638.1px;" width="41" height="41" viewBox="0 0 41 41"><circle cx="20.5" cy="20.5" r="19.5" fill="rgba(222,38,40,0.90)" stroke="#ff1414" stroke-width="2"/><path d="M20.0 11.9 H23.2 V28.7 H20.2 V16.2 C19.0 17.2 17.2 18.0 15.2 18.6 V15.8 C17.2 15.0 18.8 13.8 20.0 11.9 Z" fill="#fbe6e6"/></svg>
<div style="position:absolute;left:725.1px;top:598.2px;width:41px;height:41px;border-radius:50%;box-shadow:0 2px 5px rgba(0,0,0,.35)"></div>
<svg style="position:absolute;left:725.1px;top:598.2px;" width="41" height="41" viewBox="0 0 41 41"><circle cx="20.5" cy="20.5" r="19.5" fill="rgba(222,38,40,0.90)" stroke="#ff1414" stroke-width="2"/><path d="M14.4 15.6 C15.0 12.9 17.2 11.5 20.0 11.5 C23.4 11.5 25.6 13.6 25.6 16.5 C25.6 19.4 23.8 21.3 20.8 23.8 L17.8 26.2 H26.1 V28.9 H13.8 V26.6 L19.0 22.3 C21.8 20.0 22.7 18.6 22.7 16.6 C22.7 15.0 21.6 14.0 19.9 14.0 C18.3 14.0 17.2 15.0 16.9 16.4 Z" fill="#fbe6e6"/></svg>
</body></html>
